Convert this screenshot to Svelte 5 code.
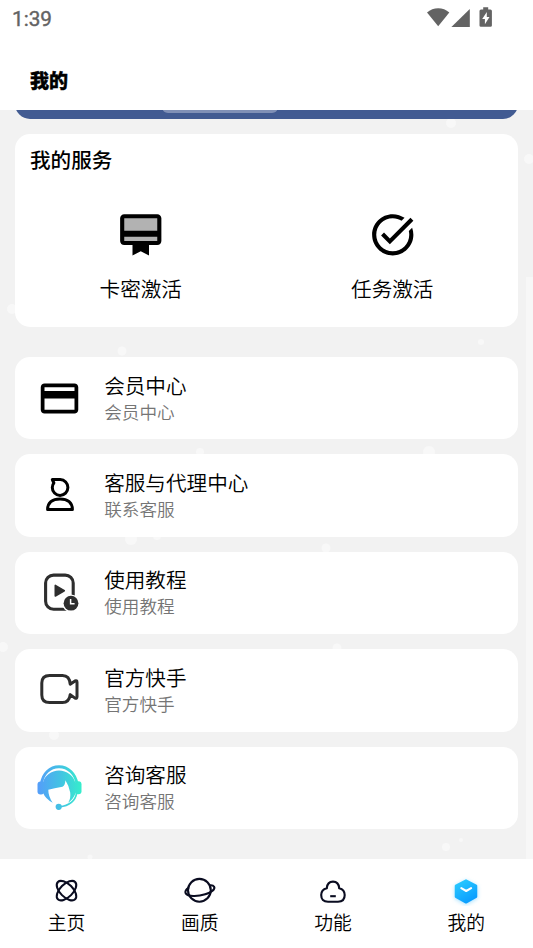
<script lang="ts">
	interface Row {
		icon: string;
		title: string;
		sub: string;
	}

	const rows: Row[] = [
		{ icon: "card", title: "会员中心", sub: "会员中心" },
		{ icon: "user", title: "客服与代理中心", sub: "联系客服" },
		{ icon: "tutorial", title: "使用教程", sub: "使用教程" },
		{ icon: "video", title: "官方快手", sub: "官方快手" },
		{ icon: "support", title: "咨询客服", sub: "咨询客服" },
	];

	const tabs = [
		{ icon: "home", label: "主页" },
		{ icon: "planet", label: "画质" },
		{ icon: "cloud", label: "功能" },
		{ icon: "mine", label: "我的" },
	];

	// x, y, radius of the snow drifting behind the cards
	const snow = [
		[451, 13, 5], [529, 49, 5], [12, 199, 5], [122, 241, 4.5],
		[481, 232, 3], [429, 342, 6], [200, 342, 4], [131, 429, 6],
		[157, 426, 4], [326, 438, 4.5], [3, 537, 5], [337, 538, 4.5],
		[54, 625, 5], [446, 737, 4], [90, 747, 2.5], [461, 730, 2],
	];
</script>

<div class="screen">
	<div class="status">
		<span class="time">1:39</span>
		<svg class="status-icons" width="68" height="24" viewBox="0 0 68 24" fill="#636363">
			<path d="M0 7.6C6.2 1.7 16.2 1.7 22.3 7.6L11.2 21.2z" />
			<path d="M42.8 4v18H24.4z" />
			<path
				fill-rule="evenodd"
				d="M56.2 2.3h5v2.2h2.2q1.5 0 1.5 1.5v14.4q0 1.4-1.4 1.4h-9.6q-1.4 0-1.4-1.4v-14.4q0-1.5 1.5-1.5h2.2zM59.8 7l-4.6 7h2.7v5.2l4.6-7.1h-2.7z"
			/>
		</svg>
	</div>
	<header>我的</header>

	<main>
		<svg class="snow" width="533" height="749" fill="#f8f8f8">
			{#each snow as [x, y, r]}
				<circle cx={x} cy={y} {r} />
			{/each}
			<rect x="526" y="167" width="7" height="582" fill="#f7f7f7" />
		</svg>

		<div class="banner"><div class="banner-chip"></div></div>

		<section class="services">
			<h2>我的服务</h2>
			<div class="service-list">
				<div class="service">
					<svg width="49.5" height="49.5" viewBox="0 0 24 24">
						<path fill="#b2b2b2" d="M3 3h18v13H3z" />
						<path
							d="M20 2H4c-1.11 0-2 .89-2 2v11c0 1.11.89 2 2 2h4v5l4-2 4 2v-5h4c1.11 0 2-.89 2-2V4c0-1.11-.89-2-2-2zm0 13H4v-2h16v2zm0-5H4V4h16v6z"
						/>
					</svg>
					<span>卡密激活</span>
				</div>
				<div class="service">
					<svg width="49.5" height="49.5" viewBox="0 0 24 24">
						<path
							d="M22 5.18L10.59 16.6l-4.24-4.24 1.41-1.41 2.83 2.83 10-10L22 5.18zm-2.21 5.04c.13.57.21 1.17.21 1.78 0 4.42-3.58 8-8 8s-8-3.58-8-8 3.58-8 8-8c1.58 0 3.04.46 4.28 1.25l1.44-1.44C16.1 2.67 14.13 2 12 2 6.48 2 2 6.48 2 12s4.48 10 10 10 10-4.48 10-10c0-1.19-.22-2.33-.6-3.39l-1.61 1.61z"
						/>
					</svg>
					<span>任务激活</span>
				</div>
			</div>
		</section>

		<div class="rows">
			{#each rows as row}
				<div class="row">
					<svg width="45" height="45" viewBox="0 0 45 45">
						{#if row.icon === "card"}
							<path
								transform="scale(1.875)"
								d="M20 4H4c-1.11 0-1.99.89-1.99 2L2 18c0 1.11.89 2 2 2h16c1.11 0 2-.89 2-2V6c0-1.11-.89-2-2-2zm0 14H4v-6h16v6zm0-10H4V6h16v2z"
							/>
						{:else if row.icon === "user"}
							<g fill="none" stroke="#000" stroke-width="3" stroke-linejoin="round">
								<path d="M15.3 6.6H23.2A7.8 7.9 0 1 1 15.3 14.4Q15.3 11.8 16.9 10z" />
								<path d="M10.6 36.6C10.6 29.8 15.2 26 23 26s12.4 3.8 12.4 10.6z" />
							</g>
						{:else if row.icon === "tutorial"}
							<rect x="8.6" y="5.1" width="27.6" height="34.2" rx="8" fill="none" stroke="#2e2e2e" stroke-width="3.1" />
							<path d="M18.3 15.4v10.6l9-5.3z" fill="#2e2e2e" stroke="#2e2e2e" stroke-width="1.6" stroke-linejoin="round" />
							<circle cx="34" cy="33.2" r="8.8" fill="#fff" />
							<circle cx="34" cy="33.2" r="7.4" fill="#2e2e2e" />
							<path d="M33.6 28.9v4.8h4" fill="none" stroke="#fff" stroke-width="1.5" />
						{:else if row.icon === "video"}
							<path
								fill="none"
								stroke="#2e2e2e"
								stroke-width="3"
								stroke-linejoin="round"
								d="M12.6 7.5H25.5Q32.6 7.5 33.2 16.2L38 12.9Q40 12.2 40 14.2V28.8Q40 30.9 38 30.1L33.2 26.6Q32.2 34.5 25.5 34.5H12.6Q4.8 34.5 4.8 26.9V15.1Q4.8 7.5 12.6 7.5z"
							/>
						{:else}
							<defs>
								<linearGradient id="head" x1="0" y1="22" x2="45" y2="22" gradientUnits="userSpaceOnUse">
									<stop offset="0" stop-color="#559cfa" />
									<stop offset=".5" stop-color="#43c1e4" />
									<stop offset="1" stop-color="#35efcb" />
								</linearGradient>
							</defs>
							<!-- headband -->
							<path
								d="M4.4 19C5.6 8.6 13 1.7 22 1.7S38.6 8.6 40 19"
								fill="none"
								stroke="url(#head)"
								stroke-width="2.9"
							/>
							<!-- microphone arm -->
							<path
								d="M39.6 28C38.6 35.5 32.5 41 22.5 41.8"
								fill="none"
								stroke="url(#head)"
								stroke-width="1.8"
							/>
							<g fill="url(#head)">
								<circle cx="21.7" cy="41.8" r="3.1" />
								<path
									d="M5.8 18C7.6 10.5 14.3 5.6 22 5.6S36.6 10.5 38.4 18V28.5Q36.5 34 31.2 37.7 34 33.5 33.2 27.5 31.9 20.5 28.4 15.2 28.4 20 25.5 21.8 17 23.2 11.3 24.7 11.3 31.5 15.7 37.7 8.6 34.2 6 27.8z"
								/>
								<rect x=".5" y="16.5" width="6.6" height="13" rx="3" />
								<rect x="37.8" y="16.2" width="6.7" height="13" rx="3" />
							</g>
						{/if}
					</svg>
					<div class="row-text">
						<div class="row-title">{row.title}</div>
						<div class="row-sub">{row.sub}</div>
					</div>
				</div>
			{/each}
		</div>
	</main>

	<nav>
		{#each tabs as tab}
			<div class="tab">
				<svg width="36" height="30" viewBox="0 0 36 30" fill="none" stroke="#0a0c20" stroke-width="2.1">
					{#if tab.icon === "home"}
						<ellipse cx="17.5" cy="14.6" rx="12.2" ry="6.4" transform="rotate(45 17.5 14.6)" />
						<ellipse cx="17.5" cy="14.6" rx="12.2" ry="6.4" transform="rotate(-45 17.5 14.6)" />
					{:else if tab.icon === "planet"}
						<circle cx="17.4" cy="14.3" r="11.4" />
						<path d="M6.7 11.6C4 13.3 2.7 15.9 3.7 17.4 5.8 20.5 15 20.9 23.2 18.3 29.8 16.3 33.4 13 32.1 10.7Q31.1 9 28.1 9.3" />
					{:else if tab.icon === "cloud"}
						<path d="M11.8 12.2Q12.3 5.6 18 5.6T24.2 12.2Q29.7 13.6 29.7 19 29.7 25.7 23 25.7H13Q6.2 25.7 6.2 19 6.2 13.6 11.8 12.2z" />
						<path d="M15.2 20.2h5.6" />
					{:else}
						<defs>
							<linearGradient id="hex" x1="10" y1="4" x2="24" y2="28" gradientUnits="userSpaceOnUse">
								<stop offset="0" stop-color="#2acbff" />
								<stop offset="1" stop-color="#0798ff" />
							</linearGradient>
						</defs>
						<path
							class="hex"
							fill="url(#hex)"
							stroke="url(#hex)"
							stroke-linejoin="round"
							d="M18 4.4 28.2 9.8V20.8L18 26.5 7.8 20.8V9.8z"
						/>
						<path d="M13.3 12.2l4.9 2.8 4.9-2.8" stroke="#fff" stroke-linecap="round" stroke-linejoin="round" />
					{/if}
				</svg>
				<span>{tab.label}</span>
			</div>
		{/each}
	</nav>
</div>

<style>
	:global(body) {
		background: #fff;
	}

	.screen {
		width: 533px;
		height: 948px;
		display: flex;
		flex-direction: column;
		overflow: hidden;
		background: #fff;
		color: #000;
		font-family: "Noto Sans CJK SC", sans-serif;
	}

	svg {
		display: block;
		flex: none;
	}

	.status {
		height: 37px;
		display: flex;
		justify-content: space-between;
		box-sizing: border-box;
		padding: 5px 38px 0 12px;
	}

	.time {
		font: 400 20.7px/28px Roboto, sans-serif;
		color: #636363;
		-webkit-text-stroke: 0.4px #636363;
	}

	header {
		height: 73px;
		box-sizing: border-box;
		padding: 29px 30px 0;
		font-size: 19px;
		line-height: 28px;
		font-weight: 900;
		-webkit-text-stroke: 0.4px #000;
	}

	main {
		position: relative;
		height: 749px;
		box-sizing: border-box;
		padding: 0 15px;
		background: #f2f2f2;
	}

	.snow {
		position: absolute;
		top: 0;
		left: 0;
	}

	.banner {
		position: relative;
		height: 8.5px;
		width: 503px;
		overflow: hidden;
		display: flex;
		align-items: flex-end;
	}

	.banner::before {
		content: "";
		width: 503px;
		height: 40px;
		flex: none;
		border-radius: 15px;
		background: #425b92;
	}

	.banner-chip {
		position: absolute;
		top: -18px;
		left: 147px;
		width: 116px;
		height: 20.5px;
		border-radius: 6px;
		background: #8090b6;
	}

	.services {
		position: relative;
		width: 503px;
		height: 193.5px;
		margin-top: 15px;
		border-radius: 15px;
		background: #fff;
		overflow: hidden;
	}

	h2 {
		margin: 10px 15px 0;
		font-size: 20.6px;
		line-height: 30px;
		font-weight: 500;
	}

	.service-list {
		display: flex;
		margin-top: 36px;
	}

	.service {
		flex: 1;
		display: flex;
		flex-direction: column;
		align-items: center;
		gap: 14px;
		font-size: 20.6px;
		line-height: 30px;
		font-weight: 350;
	}

	.rows {
		position: relative;
		width: 503px;
		margin-top: 30px;
		display: flex;
		flex-direction: column;
		gap: 15px;
	}

	.row {
		height: 82.4px;
		box-sizing: border-box;
		padding-left: 22px;
		display: flex;
		align-items: center;
		gap: 22.2px;
		border-radius: 15px;
		background: #fff;
	}

	.row-title {
		font-size: 20.6px;
		line-height: 27px;
		font-weight: 350;
	}

	.row-sub {
		font-size: 17.6px;
		line-height: 26px;
		font-weight: 350;
		color: #757575;
	}

	nav {
		height: 89px;
		display: flex;
	}

	.tab {
		flex: 1;
		display: flex;
		flex-direction: column;
		align-items: center;
		padding-top: 16.5px;
		gap: 2.5px;
		font-size: 18.8px;
		line-height: 28px;
		font-weight: 350;
	}

	.hex {
		filter: drop-shadow(0 1px 2px rgba(0, 170, 255, 0.35));
	}
</style>
